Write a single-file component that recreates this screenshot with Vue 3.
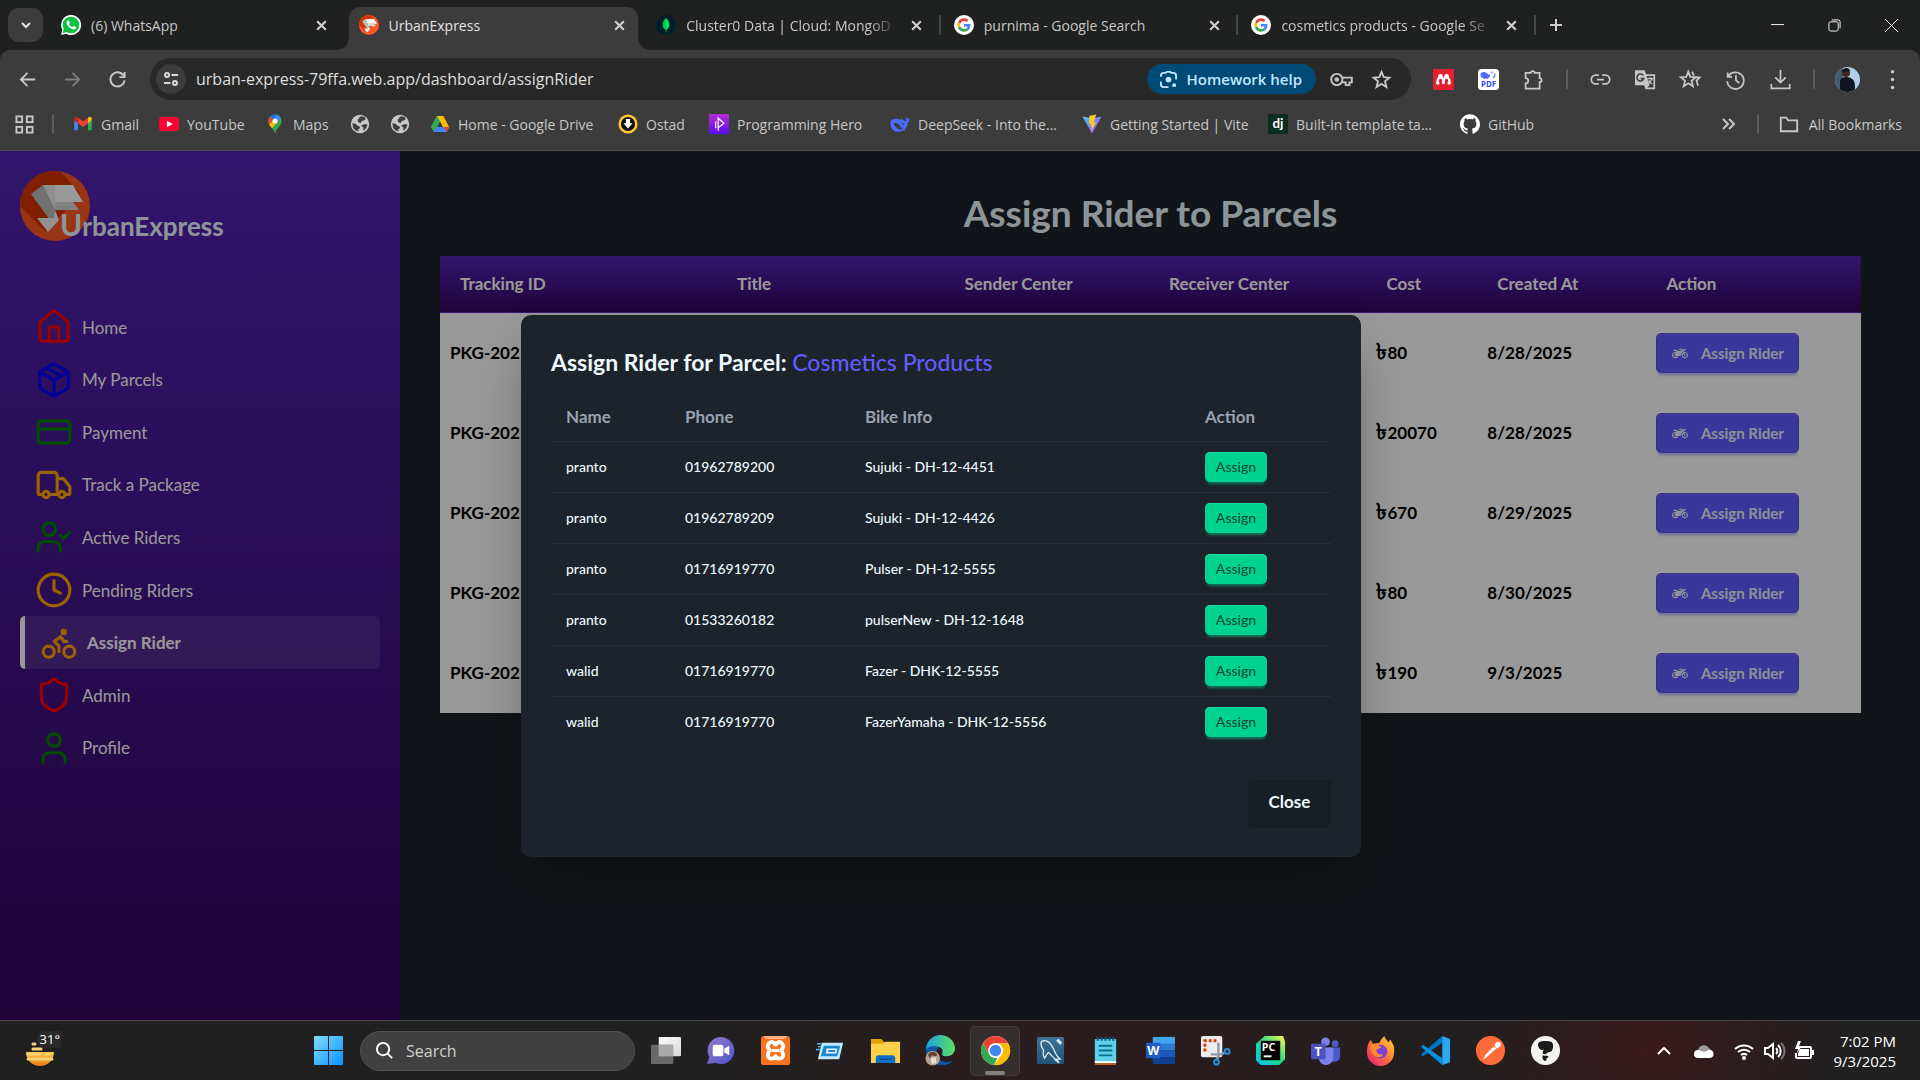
<script setup>
import { ref } from 'vue'

const google = '<circle cx="12" cy="12" r="12" fill="#fff"/><g transform="translate(4 4) scale(.3333)"><path fill="#EA4335" d="M24 9.5c3.54 0 6.71 1.22 9.21 3.6l6.85-6.85C35.9 2.38 30.47 0 24 0 14.62 0 6.51 5.38 2.56 13.22l7.98 6.19C12.43 13.72 17.74 9.5 24 9.5z"/><path fill="#4285F4" d="M46.98 24.55c0-1.57-.15-3.09-.38-4.55H24v9.02h12.94c-.58 2.96-2.26 5.48-4.78 7.18l7.73 6c4.51-4.18 7.09-10.36 7.09-17.65z"/><path fill="#FBBC05" d="M10.53 28.59c-.48-1.45-.76-2.99-.76-4.59s.27-3.14.76-4.59l-7.98-6.19C.92 16.46 0 20.12 0 24c0 3.88.92 7.54 2.56 10.78l7.97-6.19z"/><path fill="#34A853" d="M24 48c6.48 0 11.93-2.13 15.89-5.81l-7.73-6c-2.15 1.45-4.92 2.3-8.16 2.3-6.26 0-11.57-4.22-13.47-9.91l-7.98 6.19C6.51 42.62 14.62 48 24 48z"/></g>'
const brand = '<circle cx="35" cy="35" r="35" fill="#ff5722"/><path fill="#d43500" d="M40 0 A35 35 0 0 0 0 35 L26 61 L36 50 L60 22 Z"/><path fill="#bdbdbd" d="M11 23L23 14L35 29V48L30 49Z"/><path fill="#eceff1" d="M23 14H35V39L29 26Z"/><path fill="#fff" d="M35 14H53L63 31H35Z"/><path fill="#d8d8d8" d="M35 31H53L59 39H35Z"/><path fill="#f3f3f3" d="M17 47H34L35 39L39 49L28 61Z"/>'
const globe = '<circle cx="12" cy="12" r="11" fill="#c7c7c7"/><path fill="#3c3c3c" d="M3 11c3 0 5 1 6 3 2 0 3 1 3 3l-2 1v3C6 20 3 17 3 12zM12 3h5l2 3-3 2-2 0-1 3-3-1-1-3 2-2zM18 12l3 1c-1 4-3 6-5 7v-4l-3-2z"/>'

const tabs = [
  { title: '(6) WhatsApp', icon: '<path fill="#fff" d="M12 0a12 12 0 0 0-10.300 18L0 24l6.200-1.600A12 12 0 1 0 12 0z"/><circle cx="12" cy="12" r="10" fill="#0cc143"/><path fill="#0cc143" d="M2 22l1.600-6 4 4z"/><path transform="translate(1 .5) scale(.95)" fill="#fff" d="M17.472 14.382c-.297-.149-1.758-.867-2.03-.967-.273-.099-.471-.148-.67.15-.197.297-.767.966-.94 1.164-.173.199-.347.223-.644.075-.297-.15-1.255-.463-2.39-1.475-.883-.788-1.48-1.761-1.653-2.059-.173-.297-.018-.458.13-.606.134-.133.298-.347.446-.52.149-.174.198-.298.298-.497.099-.198.05-.371-.025-.52-.075-.149-.669-1.612-.916-2.207-.242-.579-.487-.5-.669-.51-.173-.008-.371-.01-.57-.01-.198 0-.52.074-.792.372-.272.297-1.04 1.016-1.04 2.479 0 1.462 1.065 2.875 1.213 3.074.149.198 2.096 3.2 5.077 4.487.709.306 1.262.489 1.694.625.712.227 1.36.195 1.871.118.571-.085 1.758-.719 2.006-1.413.248-.694.248-1.289.173-1.413-.074-.124-.272-.198-.57-.347"/>' },
  { title: 'UrbanExpress', active: true, box: '0 0 70 70', icon: brand },
  { title: 'Cluster0 Data | Cloud: MongoD', long: true, line: true, icon: '<circle cx="12" cy="12" r="12" fill="#001e2b"/><path fill="#00ed64" d="M12 3.500c3 3 4 5.500 4 8s-1 4.500-3.600 6.500L12.200 20.500h-.400L11.600 18C9 16 8 14 8 11.500s1-5 4-8z"/><path fill="#00a84a" d="M12 4v16.500h-.200L11.600 18C9 16 8 14 8 11.500s1-4.500 4-7.500z" opacity=".5"/>' },
  { title: 'purnima - Google Search', line: true, icon: google },
  { title: 'cosmetics products - Google Se', long: true, line: true, icon: google },
]

const bookmarks = [
  { title: 'Gmail', icon: '<path fill="#4285f4" d="M1.500 5v14.500H6V9.500z"/><path fill="#34a853" d="M22.500 5v14.500H18V9.500z"/><path fill="#ea4335" d="M6 4.500l6 4.600 6-4.600V11l-6 4.500L6 11z"/><path fill="#c5221f" d="M1.500 7.500V5.500C1.500 3.300 4 2.700 5.500 4L6 4.500V11z"/><path fill="#fbbc04" d="M22.500 7.500V5.500C22.500 3.300 20 2.700 18.500 4L18 4.500V11z"/>' },
  { title: 'YouTube', icon: '<rect y="3.500" width="24" height="17" rx="4" fill="#ff0033"/><path fill="#fff" d="M9.500 8v8l7-4z"/>' },
  { title: 'Maps', icon: '<path fill="#34a853" d="M12 24C11 17 4 15 4 8.500A8 8 0 0 1 20 8.500C20 15 13 17 12 24z"/><path fill="#4285f4" d="M12 .5c3 0 6 2 7.300 4.500L13 12 8 5z"/><path fill="#1a73e8" d="M12 .5C9.500.5 7.300 1.600 5.800 3.400L10 7l4.500-6z"/><path fill="#ea4335" d="M5.800 3.400A8 8 0 0 0 5.200 13L10 7z"/><path fill="#fbbc04" d="M5 12.500c1 1.800 2.300 3 3.500 4.500L15 9.500l-5.500-1z"/><circle cx="12" cy="8.500" r="3" fill="#fff"/>' },
  { title: '', label: 'Website', icon: globe },
  { title: '', label: 'Website', icon: globe },
  { title: 'Home - Google Drive', icon: '<path fill="#34a853" d="M8 2.500h4L15 8 4.500 21.500 1 15.500z"/><path fill="#fbbc04" d="M8.500 2.500H16l7 13h-7.500z"/><path fill="#4285f4" d="M8.200 15.500H23.500L20 21.500H4.500z"/><path fill="#ea4335" d="M16.500 15.500h7L20 21.500z"/><path fill="#3c3c3c" d="M12 9l3.500 6.500h-7z"/>' },
  { title: 'Ostad', icon: '<circle cx="12" cy="12" r="11.500" fill="#fccb2e"/><circle cx="12" cy="12" r="8.500" fill="#111"/><path fill="#fff" d="M9.500 6h5v5h3L12 17.500 6.500 11h3z"/>' },
  { title: 'Programming Hero', icon: '<defs><linearGradient id="ph" x2="0" y2="1"><stop stop-color="#b82fd0"/><stop offset="1" stop-color="#5a0cf0"/></linearGradient></defs><rect width="24" height="24" rx="1" fill="url(#ph)"/><path fill="none" stroke="#fff" stroke-width="1.500" d="M8 9v8M11 5l7 6-7 5.500zM11 16v4"/>' },
  { title: 'DeepSeek - Into the...', icon: '<path fill="#4d6bfe" d="M23.500 5c-2 1-3 .5-4-1-.8 1.800-.5 3 1 4-1.500 1-3.200.500-4.500-.700-.7-.7-1.500-1.800-3-2.300 0 1 .5 1.600 1 2.300C10 5.500 6 4.800 2 7c-2.500 3.500-2 8.500 1 11.500s8 3.600 12 1.500l2.500.500c.5 0 .3-.8-.5-1.500 3-2.200 4.300-5.500 4.500-9 1.300-1 2-3 2-5z"/><path fill="#3c3c3c" d="M4 11c4-1 7 1 9 4.500 1 1.800 2 2.500 3 3-4 .500-8-.500-9.500-3.500-1-1.500-1.500-3-2.500-4zM14 10.500c1.500 0 2.500 1 2.700 2.500-1.200-.2-2.200-1-2.700-2.500z"/>' },
  { title: 'Getting Started | Vite', icon: '<defs><linearGradient id="vt" x2="1" y2="1"><stop stop-color="#41d1ff"/><stop offset="1" stop-color="#bd34fe"/></linearGradient></defs><path fill="url(#vt)" d="M.5 3L12 23.500 23.500 3 13 5z"/><path fill="#ffc91f" d="M17 .5L9 2 8.300 12l2.600-.6-.8 4 2-.5-1.500 7 6.500-12-3 .5z"/>' },
  { title: 'Built-in template ta...', icon: '<rect width="24" height="24" fill="#092e20"/><text x="12" y="17" text-anchor="middle" font-size="16" font-weight="700" font-family="Lato, sans-serif" fill="#fff">dj</text>' },
  { title: 'GitHub', icon: '<path fill="#fff" d="M12 .297c-6.63 0-12 5.373-12 12 0 5.303 3.438 9.8 8.205 11.385.6.113.82-.258.82-.577 0-.285-.01-1.04-.015-2.04-3.338.724-4.042-1.61-4.042-1.61C4.422 18.07 3.633 17.7 3.633 17.7c-1.087-.744.084-.729.084-.729 1.205.084 1.838 1.236 1.838 1.236 1.07 1.835 2.809 1.305 3.495.998.108-.776.417-1.305.76-1.605-2.665-.3-5.466-1.332-5.466-5.93 0-1.31.465-2.38 1.235-3.22-.135-.303-.54-1.523.105-3.176 0 0 1.005-.322 3.3 1.23.96-.267 1.98-.399 3-.405 1.02.006 2.04.138 3 .405 2.28-1.552 3.285-1.23 3.285-1.23.645 1.653.24 2.873.12 3.176.765.84 1.23 1.91 1.23 3.22 0 4.61-2.805 5.625-5.475 5.92.42.36.81 1.096.81 2.22 0 1.606-.015 2.896-.015 3.286 0 .315.21.69.825.57C20.565 22.092 24 17.592 24 12.297c0-6.627-5.373-12-12-12"/>' },
]

const tools = [
  { name: 'Mendeley', icon: '<rect width="24" height="24" fill="#e5202e"/><g fill="#fff"><circle cx="8.500" cy="8.500" r="2.700"/><circle cx="15.500" cy="8.500" r="2.700"/><circle cx="5.500" cy="16" r="2"/><circle cx="12" cy="15.500" r="1.800"/><circle cx="18.500" cy="16" r="2"/></g><path fill="none" stroke="#fff" stroke-width="2.500" d="M5 16c0-4 1-6 3.500-7C11 10 12 12 12 15c0-3 1-5 3.500-6C18 10 19 12 19 16"/>' },
  { name: 'PDF reader', icon: '<rect width="24" height="24" rx="4" fill="#fff"/><path fill="#4d6bfe" d="M3 5c4-3 7-1 9 2l1-2c2 3 0 6-4 6-4 0-7-2-6-6zM15 3l1 3 1-3zM19 4c2 2 1 5-2 7l0-2c2-1 2-3 2-5z"/><text x="12" y="21" text-anchor="middle" font-size="9" font-weight="700" font-family="Open Sans, sans-serif" fill="#2e4bf0">PDF</text>' },
  { name: 'Extensions', icon: '<path d="M3 4.500h6a2.200 2.200 0 0 1 4.400 0H19v6a2.200 2.200 0 0 1 0 4.500v7.500H3v-6c4 0 4-6 0-6z"/>', stroke: true },
  { gap: true },
  { name: 'Copy link', icon: '<path d="M10 7H6.500a5 5 0 0 0 0 10H10M14 7h3.500a5 5 0 0 1 0 10H14M8 12h8"/>', stroke: true },
  { name: 'Translate', icon: '<path fill="#c7c7c7" d="M0 1.500h11L12.500 6H23v17H12l-1.500-4.500H0z"/><path fill="#3c3c3c" d="M13.200 8H21v13h-7l2.500-2.500z"/><path fill="none" stroke="#c7c7c7" stroke-width="1.500" d="M14 11h7M17.500 9.500V11M19.500 11c-1 3-3 4.500-4.500 6M15.500 13c1 2 2.500 3.500 4 4"/><path fill="none" stroke="#3c3c3c" stroke-width="1.800" d="M9.500 7.500a4 4 0 1 0 .5 3.500H6.500"/>' },
  { name: 'Saved', icon: '<path d="M9.500 3l2.300 6 6.200.400-4.800 4 1.600 6.300-5.300-3.500-5.300 3.500 1.600-6.300-4.800-4L7.200 9zM14 3l1.800 4.500M18 9.400l4.500.300-3.600 3.500 1.600 6"/>', stroke: true },
  { name: 'History', icon: '<path d="M3 4v5h5M3.500 9a9.500 9.500 0 1 1-1 5M12.500 7v6l4 3"/>', stroke: true },
  { name: 'Downloads', icon: '<path d="M12 1v14M6 9.500l6 6 6-6M1.500 17v5h21v-5"/>', stroke: true },
]

const menu = [
  { label: 'Home', color: '#ff0000', icon: '<path d="M15 21v-8a1 1 0 0 0-1-1h-4a1 1 0 0 0-1 1v8"/><path d="M3 10a2 2 0 0 1 .709-1.528l7-5.999a2 2 0 0 1 2.582 0l7 5.999A2 2 0 0 1 21 10v9a2 2 0 0 1-2 2H5a2 2 0 0 1-2-2z"/>' },
  { label: 'My Parcels', color: '#0000ff', icon: '<path d="M11 21.730a2 2 0 0 0 2 0l7-4A2 2 0 0 0 21 16V8a2 2 0 0 0-1-1.730l-7-4a2 2 0 0 0-2 0l-7 4A2 2 0 0 0 3 8v8a2 2 0 0 0 1 1.730z"/><path d="M12 22V12M3.290 7L12 12l8.710-5M7.500 4.270l9 5.150"/>' },
  { label: 'Payment', color: '#008000', icon: '<rect width="20" height="14" x="2" y="5" rx="2"/><path d="M2 10h20"/>' },
  { label: 'Track a Package', color: '#ffa500', icon: '<path d="M14 18V6a2 2 0 0 0-2-2H4a2 2 0 0 0-2 2v11a1 1 0 0 0 1 1h2M15 18H9M19 18h2a1 1 0 0 0 1-1v-3.650a1 1 0 0 0-.22-.624l-3.480-4.350A1 1 0 0 0 17.520 8H14"/><circle cx="17" cy="18" r="2"/><circle cx="7" cy="18" r="2"/>' },
  { label: 'Active Riders', color: '#008000', icon: '<path d="m16 11 2 2 4-4M16 21v-2a4 4 0 0 0-4-4H6a4 4 0 0 0-4 4v2"/><circle cx="9" cy="7" r="4"/>' },
  { label: 'Pending Riders', color: '#ffa500', icon: '<path d="M12 6v6l4 2"/><circle cx="12" cy="12" r="10"/>' },
  { label: 'Assign Rider', color: '#ffa500', active: true, icon: '<circle cx="18.500" cy="17.500" r="3.500"/><circle cx="5.500" cy="17.500" r="3.500"/><circle cx="15" cy="5" r="1"/><path d="M12 17.500V14l-3-3 4-3 2 3h2"/>' },
  { label: 'Admin', color: '#ff0000', icon: '<path d="M20 13c0 5-3.500 7.500-7.660 8.950a1 1 0 0 1-.67-.01C7.500 20.500 4 18 4 13V6a1 1 0 0 1 1-1c2 0 4.500-1.200 6.240-2.720a1.170 1.170 0 0 1 1.520 0C14.510 3.810 17 5 19 5a1 1 0 0 1 1 1z"/>' },
  { label: 'Profile', color: '#008000', icon: '<path d="M19 21v-2a4 4 0 0 0-4-4H9a4 4 0 0 0-4 4v2"/><circle cx="12" cy="7" r="4"/>' },
]

const parcels = [
  { cost: 80, date: '8/28/2025' },
  { cost: 20070, date: '8/28/2025' },
  { cost: 670, date: '8/29/2025' },
  { cost: 80, date: '8/30/2025' },
  { cost: 190, date: '9/3/2025' },
]

const riders = [
  { name: 'pranto', phone: '01962789200', bike: 'Sujuki - DH-12-4451' },
  { name: 'pranto', phone: '01962789209', bike: 'Sujuki - DH-12-4426' },
  { name: 'pranto', phone: '01716919770', bike: 'Pulser - DH-12-5555' },
  { name: 'pranto', phone: '01533260182', bike: 'pulserNew - DH-12-1648' },
  { name: 'walid', phone: '01716919770', bike: 'Fazer - DHK-12-5555' },
  { name: 'walid', phone: '01716919770', bike: 'FazerYamaha - DHK-12-5556' },
]

const apps = [
  { name: 'Task view', icon: '<defs><linearGradient id="tv" x2="1" y2="1"><stop stop-color="#fff"/><stop offset="1" stop-color="#d8d8d8"/></linearGradient></defs><rect x="9" y="2" width="23" height="20" rx="1" fill="url(#tv)"/><rect x="1" y="10" width="23" height="20" rx="1" fill="#777" opacity=".85"/><rect x="9" y="10" width="15" height="12" fill="#aaa"/>' },
  { name: 'Chat', icon: '<defs><linearGradient id="ct" x2="1" y2="1"><stop stop-color="#9a78c8"/><stop offset="1" stop-color="#4a55d0"/></linearGradient></defs><path fill="url(#ct)" d="M16 2a14 14 0 1 1-5 27l-9 1 2.500-7A14 14 0 0 1 16 2z"/><rect x="8" y="10" width="11" height="12" rx="2" fill="#fff"/><path fill="#fff" d="M20 14l5-3v10l-5-3z"/>' },
  { name: 'XAMPP', icon: '<rect x="1" y="1" width="30" height="30" rx="3" fill="#f47421"/><path fill="#fbb17c" d="M4 1h24l-2 3H6z"/><path fill="none" stroke="#fff" stroke-width="4" stroke-linejoin="round" d="M9 9c2-3 5-2 7 1 2-3 5-4 7-1s1 4-1 7c2 3 3 5 1 7s-5 2-7-1c-2 3-5 3-7 1s-1-4 1-7c-2-3-3-4-1-7z"/><path stroke="#fff" stroke-width="3" d="M12 16h8"/>' },
  { name: 'Run', icon: '<path fill="#bfeaff" d="M7 8h22l-4 17H3z"/><path fill="#1b86d0" d="M9 11h17l-3 11H6z"/><path fill="#e9f8ff" d="M12 14h11l-1 5H11z"/><path fill="#1b86d0" d="M14 15.500h7l-.5 2h-7z"/><path stroke="#4ac0f5" stroke-width="1.500" d="M2 9h4M3 12h3M1 15h4"/>' },
  { name: 'File Explorer', icon: '<path fill="#e0a100" d="M1 4h11l3 4v8H1z"/><path fill="#ffd04c" d="M1 9h12l3-2h15v22H1z"/><path fill="#0d72c7" d="M6 29v-5a3 3 0 0 1 3-3h14a3 3 0 0 1 3 3v5z"/><path stroke="#0a4c96" stroke-width="1.500" d="M10 25h12"/>' },
  { name: 'Edge', icon: '<defs><linearGradient id="eg" x2="1"><stop stop-color="#1aa0e0"/><stop offset="1" stop-color="#5fe060"/></linearGradient></defs><path fill="url(#eg)" d="M1 16A15 15 0 0 1 31 14c0 5-4 8-9 8-4 0-5-2-4-4 1-2-1-6-5-6-6 0-10 3-12 4z"/><path fill="#0b58a8" d="M1 15c3-4 10-5 13-2-5 4-2 15 8 15 3 0 5-1 7-2-3 4-8 5-12 5C8 31 1 24 1 15z"/><circle cx="8" cy="24" r="7.500" fill="#b9a191"/><path fill="#5c4034" d="M3 21c2-5 9-4 10 0l-3 1-3-1-2 3z"/><path fill="#e8ded6" d="M6 24l5-1 1 6-5 1z"/>' },
  { name: 'Chrome', active: true, icon: '<circle cx="16" cy="16" r="15" fill="#fff"/><path fill="#ea4335" d="M3 8.500A15 15 0 0 1 29 8.500H16a7.500 7.500 0 0 0-6.500 3.800L9.500 20z"/><path fill="#34a853" d="M3 8.500L9.500 19.800A7.500 7.500 0 0 0 16 23.500h2L14.500 31A15 15 0 0 1 3 8.500z"/><path fill="#fbbc04" d="M29 8.500A15 15 0 0 1 14.500 31L22.500 19.800A7.500 7.500 0 0 0 16 8.500z"/><circle cx="16" cy="16" r="7.500" fill="#fff"/><circle cx="16" cy="16" r="6" fill="#4285f4"/>' },
  { name: 'MySQL Workbench', icon: '<defs><linearGradient id="my" x2="0" y2="1"><stop stop-color="#3f7297"/><stop offset="1" stop-color="#1f5478"/></linearGradient></defs><rect x="2" y="2" width="28" height="28" rx="2" fill="url(#my)"/><path fill="none" stroke="#e4eef5" stroke-width="1.300" d="M10 24c-2-3-2-5-1-8-3-4-4-9-1-10 5-1 9 4 11 8 2 5 2 7 7 11l-4 0 3 4c-3-2-5-4-6-6l-5-5c-2 1-2 3-4 6z"/><path stroke="#e4eef5" stroke-width="3" d="M23 5l4 4"/>' },
  { name: 'Notepad', icon: '<rect x="5" y="4" width="22" height="26" rx="1" fill="#5ed0ea"/><path fill="#fff" d="M5 27h22v2H5z"/><path fill="#b35a18" d="M5 29h22v2H5z"/><path stroke="#0b6e8c" stroke-width="2" d="M9 11h14M9 16h14M9 21h14"/><path stroke="#0a5a75" stroke-width="2" d="M8 2v4M12 2v4M16 2v4M20 2v4M24 2v4"/>' },
  { name: 'Word', icon: '<path fill="#41a5ee" d="M8 2h23v8H8z"/><path fill="#2b7cd3" d="M8 9h23v7H8z"/><path fill="#185abd" d="M8 16h23v7H8z"/><path fill="#103f91" d="M8 23h23v7H8z"/><rect x="1" y="8" width="15" height="16" rx="1" fill="#1f5cbf"/><text x="8.500" y="21" text-anchor="middle" font-size="13" font-weight="700" font-family="Open Sans, sans-serif" fill="#fff">W</text>' },
  { name: 'Snipping Tool', icon: '<rect x="1" y="1" width="22" height="22" rx="2" fill="#ececf0"/><path fill="none" stroke="#d83b01" stroke-width="3" stroke-dasharray="3 2" d="M5 17V6h13"/><path fill="none" stroke="#8d9aa5" stroke-width="2.500" d="M19 8v14l-2 4M11 20h11l4-2"/><circle cx="17" cy="28" r="2.500" fill="none" stroke="#1c93dd" stroke-width="2"/><circle cx="28" cy="17" r="2.500" fill="none" stroke="#1c93dd" stroke-width="2"/>' },
  { name: 'PyCharm', icon: '<defs><linearGradient id="pc" x1="1" y1="0" x2="0" y2="1"><stop stop-color="#fcf84a"/><stop offset=".5" stop-color="#21d789"/><stop offset="1" stop-color="#07c3f2"/></linearGradient></defs><path fill="url(#pc)" d="M10 1h19l2 6v18l-6 6H6l-5-5V9z"/><rect x="6" y="6" width="20" height="20" fill="#000"/><text x="7" y="16" font-size="11" font-weight="700" font-family="Open Sans, sans-serif" fill="#fff">PC</text><path stroke="#fff" stroke-width="2" d="M9 22h8"/>' },
  { name: 'Teams', icon: '<circle cx="16" cy="7" r="4.500" fill="#7b83eb"/><circle cx="26" cy="9" r="3.500" fill="#5059c9"/><path fill="#5059c9" d="M20 13h11v9a6 6 0 0 1-9 5z"/><path fill="#7b83eb" d="M9 13h15v10a7.500 7.500 0 0 1-15 1z"/><rect x="1" y="9" width="15" height="16" rx="1" fill="#4b53bc"/><text x="8.500" y="22" text-anchor="middle" font-size="13" font-weight="700" font-family="Open Sans, sans-serif" fill="#fff">T</text>' },
  { name: 'Firefox', icon: '<defs><linearGradient id="ff" x1="1" y1="0" x2="0" y2="1"><stop stop-color="#ffe226"/><stop offset=".5" stop-color="#ff7139"/><stop offset="1" stop-color="#e31587"/></linearGradient></defs><path fill="url(#ff)" d="M20 1c1 4 4 5 4 7l2-3c3 4 5 8 4 13a14 14 0 0 1-28 0C2 13 3 8 6 5l2 4 7-1c1-3 3-5 5-7z"/><circle cx="16" cy="17" r="7" fill="#7a3fe0"/><path fill="#ff8a2a" d="M5 10c4-2 9 0 12 3l-5 2c-1 4 3 6 7 5-3 5-13 4-14-10z"/>' },
  { name: 'VS Code', icon: '<path fill="#0078c8" d="M1 20l2 2L23 8V1z"/><path fill="#0a8fe0" d="M1 12l2-2 20 14v7L1 12z"/><path fill="#29a9f2" d="M23 1l8 3v24l-8 3z"/>' },
  { name: 'Postman', icon: '<circle cx="16" cy="16" r="15" fill="#ff6c37"/><path fill="#fff" d="M8 26l3-6 8-8 3 2-9 8zM20 11c1-4 4-5 6-3s0 5-4 6z"/>' },
  { name: 'Capture', icon: '<circle cx="16" cy="16" r="15" fill="#f4f4ef"/><path fill="#1b1b1b" d="M10 7c3-1 9-1 12 0 3 2 2 8 0 10-2 1-5 1-6 3l-3-1c0-2 1-3 1-4-2 1-4 0-5-2-1-2-1-5 1-6z"/><path fill="#1b1b1b" d="M13 21c2 1 4 0 6 1 0 2-3 2-2 4-1 2-5 0-4-5z"/>' },
]

const url = ref('urban-express-79ffa.web.app/dashboard/assignRider')
const search = ref('')
</script>

<template>
  <div class="desktop">
    <header class="browser">
      <div class="tabstrip">
        <button class="tab-search" aria-label="Search tabs"><svg viewBox="0 0 12 12"><path d="M2 4l4 4 4-4" /></svg></button>
        <div class="tabs">
          <div v-for="(t, i) in tabs" :key="i" class="tab" :class="{ active: t.active, line: t.line }">
            <svg class="ico20" :viewBox="t.box || '0 0 24 24'" v-html="t.icon"></svg>
            <span class="tab-title" :class="{ faded: t.long }">{{ t.title }}</span>
            <button class="tab-close" aria-label="Close tab"><svg viewBox="0 0 12 12"><path d="M2 2l8 8M10 2l-8 8" /></svg></button>
          </div>
        </div>
        <button class="new-tab" aria-label="New tab"><svg viewBox="0 0 14 14"><path d="M7 1v12M1 7h12" /></svg></button>
        <div class="window-buttons">
          <button aria-label="Minimize"><svg viewBox="0 0 14 14"><path d="M0 6h14" /></svg></button>
          <button aria-label="Restore"><svg viewBox="0 0 14 14"><rect x="1" y="3" width="10" height="10" rx="2" /><path d="M4 1h7a2 2 0 0 1 2 2v7" /></svg></button>
          <button aria-label="Close"><svg viewBox="0 0 14 14"><path d="M0 0l14 14M14 0L0 14" /></svg></button>
        </div>
      </div>

      <div class="toolbar">
        <button class="nav-button" aria-label="Back"><svg viewBox="0 0 20 20"><path d="M18 10H3M10 3l-7 7 7 7" /></svg></button>
        <button class="nav-button off" aria-label="Forward"><svg viewBox="0 0 20 20"><path d="M2 10h15M10 3l7 7-7 7" /></svg></button>
        <button class="nav-button" aria-label="Reload"><svg viewBox="0 0 20 20"><path d="M16.500 6A7.500 7.500 0 1 0 17.500 11M17.500 2v5.500H12" /></svg></button>
        <div class="omnibox">
          <button class="site-info" aria-label="Site information"><svg viewBox="0 0 16 16"><circle cx="4" cy="4" r="2" /><path d="M8.500 4H15M1 12h6.500" /><circle cx="12" cy="12" r="2" /></svg></button>
          <input v-model="url" class="url" type="text" aria-label="Address" />
          <button class="homework"><svg viewBox="0 0 20 20"><path d="M2 7V6a3 3 0 0 1 3-3h2l1-1h4l1 1h2a3 3 0 0 1 3 3v4M2 12v3a3 3 0 0 0 3 3h5" /><circle cx="10" cy="10" r="3" fill="currentColor" stroke="none" /><circle cx="16" cy="16" r="2" fill="currentColor" stroke="none" /></svg>Homework help</button>
          <button class="nav-button key" aria-label="Passwords"><svg viewBox="0 0 24 16"><circle cx="7" cy="8" r="6" /><circle cx="7" cy="8" r="1.500" fill="currentColor" /><path d="M12.500 6H23v5h-2.500v3h-4v-3h-4" /></svg></button>
          <button class="nav-button" aria-label="Bookmark"><svg viewBox="0 0 20 20"><path d="M10 2l2.300 5.600 6 .5-4.600 3.900 1.500 5.900L10 14.700l-5.200 3.200 1.500-5.900L1.700 8.100l6-.5z" /></svg></button>
        </div>
        <div class="tools">
          <template v-for="(t, i) in tools" :key="i">
            <span v-if="t.gap" class="rule"></span>
            <button v-else class="tool" :class="{ stroked: t.stroke }" :aria-label="t.name"><svg viewBox="0 0 24 24" v-html="t.icon"></svg></button>
          </template>
          <span class="rule"></span>
          <button class="tool avatar" aria-label="Profile">
            <svg viewBox="0 0 25 25"><defs><clipPath id="av"><circle cx="12.500" cy="12.500" r="12.500" /></clipPath></defs><g clip-path="url(#av)"><rect width="25" height="25" fill="#b3cfe8" /><path fill="#46586c" d="M0 0h8v25H0z" /><path fill="#11151f" d="M5 25V14c1-3 3-4 6-4 5 0 9 3 9 9v6z" /><circle cx="11" cy="6" r="4" fill="#3a2a28" /><path fill="#11151f" d="M7 5c0-5 8-5 8-1z" /></g></svg>
          </button>
          <button class="tool" aria-label="Menu"><svg viewBox="0 0 24 24" fill="#c7c7c7"><circle cx="12" cy="3" r="2" /><circle cx="12" cy="12" r="2" /><circle cx="12" cy="21" r="2" /></svg></button>
        </div>
      </div>

      <nav class="bookmarks">
        <button class="apps-button" aria-label="Apps"><svg viewBox="0 0 20 20"><rect x="1.500" y="1.500" width="6" height="6" /><rect x="12.500" y="1.500" width="6" height="6" /><rect x="1.500" y="12.500" width="6" height="6" /><rect x="12.500" y="12.500" width="6" height="6" /></svg></button>
        <span class="rule"></span>
        <div class="bookmark-list">
          <a v-for="(b, i) in bookmarks" :key="i" href="#" class="bookmark" :aria-label="b.label"><svg class="ico20" viewBox="0 0 24 24" v-html="b.icon"></svg><span v-if="b.title">{{ b.title }}</span></a>
        </div>
        <button class="more" aria-label="More bookmarks"><svg viewBox="0 0 14 12"><path d="M1 1l5 5-5 5M7 1l5 5-5 5" /></svg></button>
        <span class="rule"></span>
        <a href="#" class="bookmark all"><svg class="ico20" viewBox="0 0 22 20"><path fill="none" stroke="#c7c7c7" stroke-width="2" d="M2 3h6l2 3h10v12H2z" /></svg><span>All Bookmarks</span></a>
      </nav>
    </header>

    <div class="page">
      <aside class="sidebar">
        <a href="#" class="brand">
          <svg viewBox="0 0 70 70" v-html="brand"></svg>
          <span class="brand-name"><span class="brand-initial">U</span>rbanExpress</span>
        </a>
        <nav class="menu">
          <a v-for="m in menu" :key="m.label" href="#" class="menu-item" :class="{ active: m.active }"><svg viewBox="0 0 24 24" :stroke="m.color" v-html="m.icon"></svg>{{ m.label }}</a>
        </nav>
      </aside>

      <main class="content">
        <h1>Assign Rider to Parcels</h1>
        <table class="parcels">
          <colgroup><col class="c-id" /><col class="c-title" /><col class="c-from" /><col class="c-to" /><col class="c-cost" /><col class="c-date" /><col /></colgroup>
          <thead>
            <tr><th>Tracking ID</th><th>Title</th><th>Sender Center</th><th>Receiver Center</th><th>Cost</th><th>Created At</th><th>Action</th></tr>
          </thead>
          <tbody>
            <tr v-for="(p, i) in parcels" :key="i">
              <td>PKG-202</td><td></td><td></td><td></td><td><span class="taka">৳</span>{{ p.cost }}</td><td>{{ p.date }}</td>
              <td>
                <button class="assign-rider"><svg viewBox="0 0 640 512"><path d="M512.9 192c-14.9-.1-29.1 2.3-42.4 6.9L437.6 144H520c13.3 0 24-10.7 24-24V88c0-13.3-10.7-24-24-24h-45.3c-6.8 0-13.3 2.9-17.8 7.9l-37.5 41.7-22.8-38C392.2 68.4 384.4 64 376 64h-80c-8.8 0-16 7.2-16 16v16c0 8.8 7.2 16 16 16h66.4l19.2 32H227.9c-17.7-23.1-44.9-40-99.9-40H72.5C59 104 47.7 115 48 128.5c.2 13 10.9 23.5 24 23.5h56c24.5 0 38.7 10.9 47.8 24.8l-11.3 20.5c-13-3.9-26.9-5.7-41.3-5.2C55.9 194.5 1.6 249.6 0 317c-1.6 72.1 56.3 131 128 131 59.6 0 109.7-40.8 124-96h84.2c13.7 0 24.6-11.4 24-25.1-2.1-47.1 17.5-93.7 56.2-125l12.5 20.8c-27.6 23.7-45.1 58.900-44.800 98.200.5 69.600 57.200 126.500 126.800 127.100 71.600.7 129.800-57.500 129.200-129.100-.7-69.600-57.600-126.400-127.200-126.900zM128 400c-44.100 0-80-35.900-80-80s35.900-80 80-80c4.200 0 8.400.3 12.500 1L99 316.400c-8.800 16 2.800 35.600 21 35.600h81.300c-12.400 28.200-40.600 48-73.300 48zm463.900-75.600c-2.200 40.600-35 73.400-75.500 75.500-46.100 2.500-84.400-34.300-84.400-79.900 0-21.400 8.400-40.800 22.100-55.100l49.400 82.400c4.500 7.600 14.400 10 22 5.500l13.700-8.200c7.600-4.500 10-14.400 5.500-22l-48.600-80.900c5.200-1.100 10.500-1.600 15.900-1.600 45.600-.1 82.300 38.200 79.900 84.300z" /></svg>Assign Rider</button>
              </td>
            </tr>
          </tbody>
        </table>
      </main>

      <div class="backdrop">
        <section class="modal" role="dialog" aria-labelledby="modal-title">
          <h2 id="modal-title">Assign Rider for Parcel: <span>Cosmetics Products</span></h2>
          <table class="riders">
            <colgroup><col class="r-name" /><col class="r-phone" /><col class="r-bike" /><col /></colgroup>
            <thead><tr><th>Name</th><th>Phone</th><th>Bike Info</th><th>Action</th></tr></thead>
            <tbody>
              <tr v-for="(r, i) in riders" :key="i">
                <td>{{ r.name }}</td><td>{{ r.phone }}</td><td>{{ r.bike }}</td><td><button class="assign">Assign</button></td>
              </tr>
            </tbody>
          </table>
          <div class="modal-actions"><button class="close">Close</button></div>
        </section>
      </div>
    </div>

    <footer class="taskbar">
      <button class="weather" aria-label="Weather">
        <svg viewBox="0 0 30 28"><defs><linearGradient id="sun" x2="0" y2="1"><stop stop-color="#ffc83d" /><stop offset="1" stop-color="#f07a1a" /></linearGradient></defs><path fill="url(#sun)" d="M1 11h28a14 14 0 0 1-28 0z" /><path stroke="#f7d27a" stroke-width="3" stroke-linecap="round" d="M8 3h2M8 8h8M3 13h12M21 13h3M3 18h24" /></svg>
        <span>31°</span>
      </button>
      <div class="dock">
        <button class="start" aria-label="Start"><svg viewBox="0 0 29 29"><defs><linearGradient id="win" x2="1" y2="1"><stop stop-color="#7fdcff" /><stop offset="1" stop-color="#0a93ff" /></linearGradient></defs><path fill="url(#win)" d="M0 1a1 1 0 0 1 1-1h13v14H0zM15 0h13a1 1 0 0 1 1 1v13H15zM0 15h14v14H1a1 1 0 0 1-1-1zM15 15h14v13a1 1 0 0 1-1 1H15z" /></svg></button>
        <label class="search">
          <svg viewBox="0 0 20 20"><circle cx="8.500" cy="8.500" r="6.500" /><path d="M13 13l5 5" /></svg>
          <input v-model="search" type="text" placeholder="Search" aria-label="Search" />
        </label>
        <button v-for="a in apps" :key="a.name" class="app" :class="{ active: a.active }" :aria-label="a.name"><svg viewBox="0 0 32 32" v-html="a.icon"></svg></button>
      </div>
      <div class="tray">
        <svg class="t-chevron" viewBox="0 0 14 14"><path d="M1 10l6-6 6 6" /></svg>
        <svg class="t-cloud" viewBox="0 0 20 16"><path fill="#9b9b9b" stroke="none" d="M4 8a6 6 0 0 1 11-3l3 3-12 4z" /><path fill="#fff" stroke="none" d="M4 15a4 4 0 0 1 0-8l6 2 5-2a4 4 0 0 1 1 8z" /></svg>
        <svg class="t-wifi" viewBox="0 0 20 18"><path d="M1 7a13 13 0 0 1 18 0M4 10a9 9 0 0 1 12 0M7 13a5 5 0 0 1 6 0" /><circle cx="10" cy="16" r="2" fill="#fff" stroke="none" /></svg>
        <svg class="t-sound" viewBox="0 0 20 18"><path d="M1 6h3l5-4v14l-5-4H1z" /><path d="M12 6a4 4 0 0 1 0 6M14 3a8 8 0 0 1 0 12" /><path stroke="#777" d="M17 1a11 11 0 0 1 0 16" /></svg>
        <svg class="t-battery" viewBox="0 0 20 20"><path d="M6 6h10a1 1 0 0 1 1 1v9a1 1 0 0 1-1 1H3a1 1 0 0 1-1-1v-4" /><path fill="#fff" stroke="none" d="M6 8h9v7H4v-3zM18 9h2v5h-2zM4 0L1 8h3l-1 4 5-7H5l2-5z" /></svg>
      </div>
      <button class="clock"><span>7:02 PM</span><span>9/3/2025</span></button>
    </footer>
  </div>
</template>

<style>
body { margin: 0; background: #1d232a; }
</style>

<style scoped>
* { box-sizing: border-box; }
button { padding: 0; border: 0; background: none; color: inherit; font: inherit; cursor: pointer; }
a { color: inherit; text-decoration: none; }
svg { display: block; flex: none; overflow: visible; }

.desktop { display: flex; flex-direction: column; min-height: 100vh; font-family: "Open Sans", "Noto Sans", sans-serif; font-size: 14px; color: #c7c7c7; }
.ico20 { width: 20px; height: 20px; }

/* Browser chrome */
.browser { background: #1f2120; }
.tabstrip { display: flex; height: 50px; padding-left: 8px; align-items: center; }
.tab-search { display: grid; place-items: center; width: 35px; height: 34px; margin-right: 5px; border-radius: 11px; background: #3c3c3c; }
.tab-search svg { width: 12px; height: 12px; fill: none; stroke: #e3e3e3; stroke-width: 2; }
.tabs { display: flex; flex: 0 1 1488px; min-width: 0; height: 50px; }
.tab { position: relative; display: flex; flex: 1 1 0; min-width: 0; align-items: center; gap: 10px; padding: 0 14px 0 13px; }
.tab > * { position: relative; }
.tab.active { color: #e3e3e3; }
.tab.active::before { content: ""; position: absolute; top: 7px; right: 5px; bottom: 0; left: 3px; border-radius: 11px 11px 0 0; background: #3c3c3c; }
.tab.active::after { content: ""; position: absolute; right: -6px; bottom: 0; left: -8px; height: 11px; background: radial-gradient(circle at 0 0, transparent 10px, #3c3c3c 11px) left / 11px 11px no-repeat, radial-gradient(circle at 100% 0, transparent 10px, #3c3c3c 11px) right / 11px 11px no-repeat; }
.tab.line { padding-right: 12px; border-right: 2px solid transparent; border-image: linear-gradient(transparent 15px, #454746 15px, #454746 35px, transparent 35px) 1; }
.tab-title { flex: 1; min-width: 0; white-space: nowrap; }
.tab-title.faded { -webkit-mask-image: linear-gradient(to left, transparent, #000 28px); mask-image: linear-gradient(to left, transparent, #000 28px); }
.tab-close { display: grid; place-items: center; width: 20px; height: 20px; }
.tab-close svg { width: 13px; height: 13px; fill: none; stroke: #d0d0d0; stroke-width: 2; }
.new-tab { margin-left: 13px; }
.new-tab svg { width: 14px; height: 14px; fill: none; stroke: #d0d0d0; stroke-width: 2; }
.window-buttons { display: flex; margin-left: auto; }
.window-buttons button { display: grid; place-items: center; width: 57px; height: 40px; }
.window-buttons svg { width: 13px; height: 13px; fill: none; stroke: #fff; stroke-width: 1; }

.toolbar { display: flex; align-items: center; height: 58px; padding: 0 5px; border-radius: 10px 10px 0 0; background: #3c3c3c; }
.nav-button { display: grid; place-items: center; width: 45px; height: 36px; color: #c7c7c7; }
.nav-button svg { width: 19px; height: 19px; fill: none; stroke: currentColor; stroke-width: 2; }
.nav-button.off { color: #7d7d7d; }
.nav-button.key svg { width: 23px; height: 15px; }
.omnibox { display: flex; flex: 1; min-width: 0; align-items: center; height: 42px; margin-left: 10px; padding: 0 10px 0 6px; border-radius: 21px; background: #282828; }
.omnibox .nav-button { width: 40px; }
.site-info { display: grid; flex: none; place-items: center; width: 30px; height: 30px; border-radius: 50%; background: #3c3c3c; }
.site-info svg { width: 16px; height: 16px; fill: none; stroke: #d8d8d8; stroke-width: 2; }
.url { flex: 1; min-width: 0; margin-left: 10px; padding: 0; border: 0; outline: 0; background: none; color: #dedede; font-family: inherit; font-size: 16px; line-height: 24px; }
.homework { display: flex; align-items: center; gap: 9px; height: 30px; margin-right: 5px; padding: 0 14px 0 12px; border-radius: 15px; background: #004a77; color: #c2e7ff; font-size: 15px; font-weight: 600; white-space: nowrap; }
.homework svg { width: 19px; height: 19px; fill: none; stroke: currentColor; stroke-width: 2; }
.tools { display: flex; align-items: center; margin-left: 10px; }
.rule { flex: none; width: 2px; height: 20px; border-radius: 1px; background: #5c5e5d; }
.tools .rule { margin: 0 10px; }
.tool { display: grid; place-items: center; width: 45px; height: 36px; }
.tool svg { width: 21px; height: 21px; }
.tool.stroked svg { fill: none; stroke: #c7c7c7; stroke-width: 2; }
.tool.avatar svg { width: 25px; height: 25px; }

.bookmarks { display: flex; align-items: center; height: 43px; padding: 0 18px 10px 15px; border-bottom: 1px solid #4a4d4c; background: #3c3c3c; white-space: nowrap; }
.apps-button svg { width: 19px; height: 19px; fill: none; stroke: #c7c7c7; stroke-width: 2; }
.apps-button + .rule { margin: 0 19px 0 18px; }
.bookmark-list { display: grid; flex: 1; grid-template-columns: 86px 106px 85px 40px 40px 188px 91px 181px 192px 186px 192px 80px; min-width: 0; overflow: hidden; }
.bookmark { display: flex; align-items: center; gap: 8px; }
.more { margin-right: 21px; }
.more svg { width: 14px; height: 12px; fill: none; stroke: #c7c7c7; stroke-width: 2; }
.bookmark.all { margin-left: 20px; gap: 10px; }

/* Web page */
.page { position: relative; display: flex; flex: 1; overflow: hidden; background: #1d232a; color: #ecf9ff; font-family: Lato, "Noto Sans", sans-serif; }
.sidebar { flex: none; width: 400px; padding: 20px; background: linear-gradient(#5424b6, #350560); }
.brand { display: flex; align-items: flex-end; height: 70px; margin-bottom: 60px; }
.brand svg { width: 70px; height: 70px; }
.brand-name { position: relative; margin-left: -30px; font-size: 26px; font-weight: 700; line-height: 30px; }
.brand-initial { font-size: 30px; }
.menu { display: grid; grid-auto-rows: 1fr; height: 473px; }
.menu-item { display: flex; align-items: center; gap: 9px; padding-left: 15px; border-radius: 5px; font-size: 17px; color: #fff; }
.menu-item svg { width: 38px; height: 38px; fill: none; stroke-width: 2; stroke-linecap: round; stroke-linejoin: round; }
.menu-item.active { border-left: 5px solid #fff; background: rgba(255, 255, 255, .1); font-weight: 700; }

.content { flex: 1; min-width: 0; padding: 40px 59px 40px 40px; }
h1 { margin: 0 0 20px; font-size: 37px; font-weight: 700; line-height: 44px; text-align: center; }
table { width: 100%; border-collapse: separate; border-spacing: 0; table-layout: fixed; text-align: left; }
.c-id { width: 19.5%; } .c-title { width: 16%; } .c-from { width: 14.4%; } .c-to { width: 15.3%; } .c-cost { width: 7.8%; } .c-date { width: 11.9%; }
.parcels { margin-top: 21px; }
.parcels thead { background: linear-gradient(#5424b6, #350560); color: #fff; }
.parcels th { height: 57px; padding: 0 20px 1px; border-bottom: 1px solid #5f2bc0; font-size: 17px; font-weight: 700; white-space: nowrap; }
.parcels tbody { background: #fff; color: #000; }
.parcels td { height: 80px; padding: 0 10px; font-size: 17px; font-weight: 700; line-height: 24px; }
.taka { font-size: 22px; line-height: 20px; }
.assign-rider { display: flex; align-items: center; justify-content: center; gap: 13px; width: 143px; height: 40px; border: 1px solid #5653e0; border-radius: 5px; background: #605dff; color: #edf1fe; font-size: 15px; font-weight: 700; box-shadow: inset 0 1px #6f6cff, 0 4px 3px -2px rgba(96, 93, 255, .5); }
.assign-rider svg { width: 16px; height: 13px; fill: currentColor; }

/* Dialog */
.backdrop { position: absolute; inset: 0; display: grid; place-items: center; padding: 20px 38px 20px 0; background: rgba(0, 0, 0, .4); }
.modal { width: 90%; max-width: 840px; padding: 30px; border-radius: 10px; background: #1d232a; box-shadow: 0 25px 50px -12px rgba(0, 0, 0, .4); }
h2 { margin: 0 0 14px; font-size: 23px; font-weight: 700; line-height: 34px; }
h2 span { color: #605dff; font-weight: 500; }
.r-name { width: 119px; } .r-phone { width: 180px; } .r-bike { width: 340px; }
.riders th, .riders td { border-bottom: 1px solid #282e37; }
.riders tbody tr:last-child td { height: 50px; border-bottom: 0; }
.riders th { height: 49px; padding: 0 15px; color: #98a1b0; font-size: 17px; font-weight: 700; }
.riders td { height: 51px; padding: 0 15px; font-size: 14px; font-weight: 500; }
.assign { display: block; width: 62px; height: 30px; border-radius: 5px; background: #00d390; color: #004c39; font-size: 14px; box-shadow: inset 0 1px #1adb9f, 0 4px 3px -2px rgba(0, 211, 144, .5); }
.modal-actions { display: flex; justify-content: flex-end; margin-top: 30px; }
.close { width: 83px; height: 50px; border: 1px solid #161b22; border-radius: 5px; background: #191e24; font-size: 17px; font-weight: 700; box-shadow: inset 0 1px #252a31; }

/* Taskbar */
.taskbar { position: relative; display: flex; align-items: center; height: 60px; border-top: 1px solid #484848; background: radial-gradient(ellipse 200px 120px at 86% 50%, #3a191c, transparent), radial-gradient(ellipse 420px 120px at 57% 50%, #2d1b1c, transparent), #202020; color: #fff; font-size: 14px; }
.weather { position: relative; width: 40px; height: 40px; margin-left: 25px; }
.weather svg { width: 30px; height: 28px; margin-top: 8px; }
.weather span { position: absolute; top: 0; right: 4px; padding: 0 1px 0 3px; border-radius: 8px 0 0 8px; background: #2a2a2a; font-size: 13px; line-height: 17px; }
.dock { display: flex; align-items: center; margin-left: 249px; }
.start svg { width: 29px; height: 29px; }
.search { display: flex; align-items: center; gap: 12px; width: 275px; height: 40px; margin: 0 5px 0 17px; padding: 0 14px; border: 1px solid #505050; border-radius: 20px; background: #404040; }
.search svg { width: 19px; height: 19px; fill: none; stroke: #fff; stroke-width: 2; }
.search input { width: 100%; min-width: 0; padding: 0; border: 0; outline: 0; background: none; color: #fff; font-family: inherit; font-size: 16px; line-height: 24px; }
.search input::placeholder { color: #d0d0d0; opacity: 1; }
.app { position: relative; display: grid; place-items: center; width: 50px; height: 50px; margin-right: 5px; border-radius: 5px; }
.app svg { width: 31px; height: 31px; }
.app.active { background: #342e2d; box-shadow: inset 0 0 0 1px #403a39; }
.app.active::after { content: ""; position: absolute; bottom: 1px; left: 15px; width: 20px; height: 4px; border-radius: 2px; background: #858080; }
.tray { display: flex; align-items: center; margin-left: auto; }
.tray svg { width: 20px; height: 18px; fill: none; stroke: #fff; stroke-width: 2; }
.tray .t-chevron { width: 14px; height: 14px; margin-right: 23px; }
.tray .t-wifi { margin: 0 10px 0 20px; }
.tray .t-battery { margin-left: 10px; height: 20px; }
.clock { display: flex; flex-direction: column; align-items: flex-end; width: 82px; margin-right: 24px; font-size: 15px; line-height: 20px; }
</style>
